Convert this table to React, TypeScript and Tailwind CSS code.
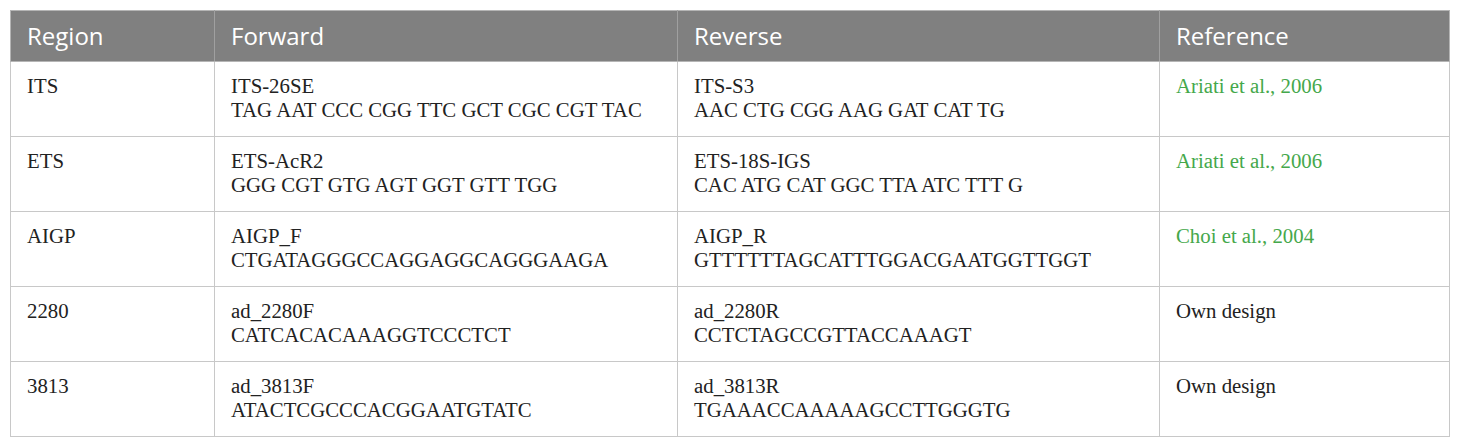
const rows = [
  { region: "ITS", fName: "ITS-26SE", fSeq: "TAG AAT CCC CGG TTC GCT CGC CGT TAC", rName: "ITS-S3", rSeq: "AAC CTG CGG AAG GAT CAT TG", ref: "Ariati et al., 2006", link: true },
  { region: "ETS", fName: "ETS-AcR2", fSeq: "GGG CGT GTG AGT GGT GTT TGG", rName: "ETS-18S-IGS", rSeq: "CAC ATG CAT GGC TTA ATC TTT G", ref: "Ariati et al., 2006", link: true },
  { region: "AIGP", fName: "AIGP_F", fSeq: "CTGATAGGGCCAGGAGGCAGGGAAGA", rName: "AIGP_R", rSeq: "GTTTTTTAGCATTTGGACGAATGGTTGGT", ref: "Choi et al., 2004", link: true },
  { region: "2280", fName: "ad_2280F", fSeq: "CATCACACAAAGGTCCCTCT", rName: "ad_2280R", rSeq: "CCTCTAGCCGTTACCAAAGT", ref: "Own design", link: false },
  { region: "3813", fName: "ad_3813F", fSeq: "ATACTCGCCCACGGAATGTATC", rName: "ad_3813R", rSeq: "TGAAACCAAAAAGCCTTGGGTG", ref: "Own design", link: false },
];

const App = () => {
  return (
    <div className="w-[1460px] h-[446px] bg-white pl-[10px] pt-[10px]">
      <table className="w-[1439px] border-collapse table-fixed">
        <colgroup>
          <col className="w-[204px]" />
          <col className="w-[463px]" />
          <col className="w-[482px]" />
          <col className="w-[290px]" />
        </colgroup>
        <thead>
          <tr className="h-[51px] bg-[#808080] text-white text-left font-['Open_Sans',sans-serif] text-[24px]">
            <th className="font-normal px-4 border border-[#b5b5b5] border-r-[#a0a0a0]">Region</th>
            <th className="font-normal px-4 border border-[#b5b5b5] border-r-[#a0a0a0]">Forward</th>
            <th className="font-normal px-4 border border-[#b5b5b5] border-r-[#a0a0a0]">Reverse</th>
            <th className="font-normal px-4 border border-[#b5b5b5]">Reference</th>
          </tr>
        </thead>
        <tbody className="font-['Liberation_Serif',serif] text-[20.8px] leading-[24px] text-[#222]">
          {rows.map((r) => (
            <tr key={r.region} className="h-[75px] align-top">
              <td className="px-4 pt-[12px] border border-[#c8c8c8]">{r.region}</td>
              <td className="px-4 pt-[12px] border border-[#c8c8c8]">
                <div>{r.fName}</div>
                <div>{r.fSeq}</div>
              </td>
              <td className="px-4 pt-[12px] border border-[#c8c8c8]">
                <div>{r.rName}</div>
                <div>{r.rSeq}</div>
              </td>
              <td className={`px-4 pt-[12px] border border-[#c8c8c8] ${r.link ? "text-[#45a84b]" : ""}`}>
                {r.ref}
              </td>
            </tr>
          ))}
        </tbody>
      </table>
    </div>
  );
};

export default App;
